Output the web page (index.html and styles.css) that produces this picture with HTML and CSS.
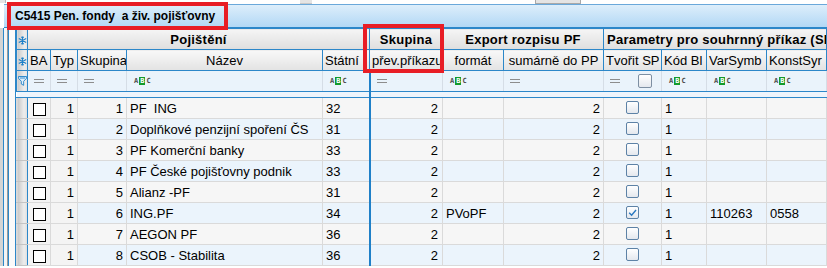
FILE: index.html
```html
<!DOCTYPE html>
<html lang="cs">
<head>
    <meta charset="UTF-8">
    <title>C5415 Pen. fondy a živ. pojišťovny</title>
    <link rel="stylesheet" href="styles.css">
</head>
<body>
    <div class="topStrip">
        <span class="stub stubLeft"></span>
        <span class="stub stubMid"></span>
        <span class="stub stubBox"></span>
    </div>

    <div class="titleBar"><span class="titleText">C5415 Pen. fondy  a živ. pojišťovny</span></div>

    <div class="gridWrap">
        <div class="sideRail"></div>
        <table class="grid">
            <colgroup>
                <col style="width:11px">
                <col style="width:23px">
                <col style="width:27px">
                <col style="width:49px">
                <col style="width:196px">
                <col style="width:47px">
                <col style="width:73px">
                <col style="width:61px">
                <col style="width:100px">
                <col style="width:58px">
                <col style="width:45px">
                <col style="width:60px">
                <col style="width:60px">
            </colgroup>
            <thead>
                <tr class="groupRow">
                    <th class="sel"><svg class="snow" viewBox="0 0 9 9"><path d="M4.5 0.5v8M0.8 2.5l7.4 4M0.8 6.5l7.4-4M3.3 0.8l1.2 1.2 1.2-1.2M3.3 8.2l1.2-1.2 1.2 1.2"/></svg></th>
                    <th colspan="5">Pojištění</th>
                    <th>Skupina</th>
                    <th colspan="2">Export rozpisu PF</th>
                    <th colspan="4" class="left">Parametry pro souhrnný příkaz (SP)</th>
                </tr>
                <tr class="headRow">
                    <th class="sel"><svg class="snow" viewBox="0 0 9 9"><path d="M4.5 0.5v8M0.8 2.5l7.4 4M0.8 6.5l7.4-4M3.3 0.8l1.2 1.2 1.2-1.2M3.3 8.2l1.2-1.2 1.2 1.2"/></svg></th>
                    <th class="left">BA</th>
                    <th class="left">Typ</th>
                    <th class="left">Skupina</th>
                    <th>Název</th>
                    <th class="left">Státní</th>
                    <th class="left">přev.příkazu</th>
                    <th>formát</th>
                    <th>sumárně do PP</th>
                    <th class="left">Tvořit SP</th>
                    <th class="left">Kód Bl</th>
                    <th class="left">VarSymb</th>
                    <th class="left">KonstSyr</th>
                </tr>
                <tr class="filterRow">
                    <td class="sel"><svg class="funnel" viewBox="0 0 10 11"><path d="M0.5 0.5h9v2l-3.2 3.3v4.5l-2.6-1.4v-3.1l-3.2-3.3z"/><path class="funnelIn" d="M2 2.2h6"/></svg></td>
                    <td><span class="eq"></span></td>
                    <td><span class="eq"></span></td>
                    <td><span class="eq"></span></td>
                    <td><span class="abc"><i>A</i><b>B</b><i>C</i></span></td>
                    <td><span class="abc"><i>A</i><b>B</b><i>C</i></span></td>
                    <td class="frozen"><span class="eq"></span></td>
                    <td><span class="abc"><i>A</i><b>B</b><i>C</i></span></td>
                    <td><span class="eq"></span></td>
                    <td><span class="eq"></span><span class="cb cbFilter"></span></td>
                    <td><span class="abc"><i>A</i><b>B</b><i>C</i></span></td>
                    <td><span class="abc"><i>A</i><b>B</b><i>C</i></span></td>
                    <td><span class="abc"><i>A</i><b>B</b><i>C</i></span></td>
                </tr>
                <tr class="gapRow">
                    <td colspan="6"></td>
                    <td colspan="7" class="frozen"></td>
                </tr>
            </thead>
            <tbody>
                <tr>
                    <td class="sel"></td><td class="ba"><span class="box"></span></td><td class="num typ">1</td><td class="num">1</td><td>PF&nbsp; ING</td><td>32</td>
                    <td class="num frozen">2</td><td></td><td class="num">2</td><td class="mid"><span class="cb"></span></td><td>1</td><td></td><td></td>
                </tr>
                <tr>
                    <td class="sel"></td><td class="ba"><span class="box"></span></td><td class="num typ">1</td><td class="num">2</td><td>Doplňkové penzijní spoření ČS</td><td>31</td>
                    <td class="num frozen">2</td><td></td><td class="num">2</td><td class="mid"><span class="cb"></span></td><td>1</td><td></td><td></td>
                </tr>
                <tr>
                    <td class="sel"></td><td class="ba"><span class="box"></span></td><td class="num typ">1</td><td class="num">3</td><td>PF Komerční banky</td><td>33</td>
                    <td class="num frozen">2</td><td></td><td class="num">2</td><td class="mid"><span class="cb"></span></td><td>1</td><td></td><td></td>
                </tr>
                <tr>
                    <td class="sel"></td><td class="ba"><span class="box"></span></td><td class="num typ">1</td><td class="num">4</td><td>PF České pojišťovny podnik</td><td>33</td>
                    <td class="num frozen">2</td><td></td><td class="num">2</td><td class="mid"><span class="cb"></span></td><td>1</td><td></td><td></td>
                </tr>
                <tr>
                    <td class="sel"></td><td class="ba"><span class="box"></span></td><td class="num typ">1</td><td class="num">5</td><td>Alianz -PF</td><td>31</td>
                    <td class="num frozen">2</td><td></td><td class="num">2</td><td class="mid"><span class="cb"></span></td><td>1</td><td></td><td></td>
                </tr>
                <tr>
                    <td class="sel"></td><td class="ba"><span class="box"></span></td><td class="num typ">1</td><td class="num">6</td><td>ING.PF</td><td>34</td>
                    <td class="num frozen">2</td><td>PVoPF</td><td class="num">2</td><td class="mid"><span class="cb checked"><svg viewBox="0 0 10 10"><path d="M2 5.2l2.2 2.2 4-4.6"/></svg></span></td><td>1</td><td>110263</td><td>0558</td>
                </tr>
                <tr>
                    <td class="sel"></td><td class="ba"><span class="box"></span></td><td class="num typ">1</td><td class="num">7</td><td>AEGON PF</td><td>36</td>
                    <td class="num frozen">2</td><td></td><td class="num">2</td><td class="mid"><span class="cb"></span></td><td>1</td><td></td><td></td>
                </tr>
                <tr>
                    <td class="sel"></td><td class="ba"><span class="box"></span></td><td class="num typ">1</td><td class="num">8</td><td>CSOB - Stabilita</td><td>36</td>
                    <td class="num frozen">2</td><td></td><td class="num">2</td><td class="mid"><span class="cb"></span></td><td>1</td><td></td><td></td>
                </tr>
            </tbody>
        </table>
    </div>

    <!-- zvýraznění v náhledu -->
    <div class="mark markTitle"></div>
    <div class="mark markGroup"></div>
</body>
</html>
```

FILE: styles.css
```css
body {
    margin: 0;
    width: 827px;
    height: 268px;
    overflow: hidden;
    position: relative;
    background: #fff;
    font-family: "Liberation Sans", Arial, sans-serif;
    font-size: 13px;
    color: #000;
}

/* horni prouzek s kousky ovladacich prvku */
.topStrip {
    height: 4px;
    display: flex;
}
.stub {
    display: block;
    height: 3px;
    background: #e4e4e4;
}
.stubLeft {
    width: 5px;
    border-right: 1px solid #b8b8b8;
}
.stubMid {
    width: 12px;
    margin-left: 294px;
    border-bottom: 1px solid #c8c8c8;
}
.stubBox {
    width: 44px;
    margin-left: 223px;
    border: 1px solid #a8a8a8;
    border-top: 0;
}

.titleBar {
    height: 22px;
    margin-left: 4px;
    padding-left: 11px;
    display: flex;
    align-items: center;
    border-top: 1px solid #6aa8da;
    border-bottom: 1px solid #2c87c9;
    background: linear-gradient(#ddeefb, #b2d8f5);
}
.titleText {
    font-weight: bold;
    font-size: 12px;
    white-space: pre;
}

.gridWrap {
    display: flex;
}
.sideRail {
    flex: none;
    width: 16px;
    background: linear-gradient(to right, #d4d4d4 0 3px, #2c87c9 3px 4px, #f4f4f4 4px 7px, #9c9c9c 7px 8px, #2c87c9 8px 9px, #fafafa 9px 15px, #2c87c9 15px 16px);
}

.grid {
    flex: none;
    width: 810px;
    border-collapse: collapse;
    table-layout: fixed;
}
.grid th,
.grid td {
    box-sizing: border-box;
    height: 21px;
    padding: 0 3px;
    white-space: nowrap;
    overflow: hidden;
    line-height: 19px;
}

/* hlavicky */
.grid th {
    border: 1px solid #2c87c9;
    background: linear-gradient(#f8f8f8, #e3e3e3);
    font-weight: normal;
    text-align: center;
}
.groupRow th {
    font-weight: bold;
    letter-spacing: 0.25px;
    background: linear-gradient(#f5f5f5, #dedede);
}
.grid th.left {
    text-align: left;
}
.headRow th.left {
    padding-left: 2px;
}
.grid .sel {
    padding: 0;
    background: linear-gradient(to right, #c9c9c9, #eeeeee 70%, #e2e2e2);
    text-align: center;
}
.snow {
    width: 9px;
    height: 9px;
    vertical-align: middle;
    stroke: #1f80c8;
    stroke-width: 1.1;
    fill: none;
}

/* radek filtru */
.filterRow td {
    background: #eaf3fb;
    border-left: 1px solid #d5dde6;
    border-right: 1px solid #d5dde6;
    border-bottom: 1px solid #2c87c9;
    padding-left: 6px;
    font-size: 0;
}
.filterRow td.sel {
    padding: 0;
    border-left: 1px solid #2c87c9;
    border-right: 1px solid #2c87c9;
}
.funnel {
    width: 9px;
    height: 10px;
    vertical-align: middle;
    fill: #dff0fc;
    stroke: #1f80c8;
    stroke-width: 1;
}
.funnelIn {
    stroke: #1f80c8;
}
.eq {
    display: inline-block;
    width: 10px;
    height: 2px;
    border-top: 1px solid #8d8d8d;
    border-bottom: 1px solid #8d8d8d;
    vertical-align: middle;
}
.abc {
    display: inline-block;
    vertical-align: middle;
    font-family: "DejaVu Sans Mono", monospace;
    font-size: 7px;
    line-height: 8px;
    font-weight: bold;
}
.abc i {
    font-style: normal;
    color: #4a4a4a;
    padding: 0 1px;
}
.abc b {
    display: inline-block;
    background: #149a2c;
    color: #fff;
    padding: 0 1px;
}
.cb {
    display: inline-block;
    width: 11px;
    height: 11px;
    border: 1px solid #5d82a6;
    border-radius: 2px;
    background: linear-gradient(#ffffff, #e4e8ee);
    vertical-align: middle;
    box-sizing: content-box;
}
.cbFilter {
    width: 12px;
    height: 12px;
    margin-left: 18px;
    border-color: #7d8fa3;
}
.cb svg {
    display: block;
    width: 11px;
    height: 11px;
    fill: none;
    stroke: #2a78c0;
    stroke-width: 1.3;
}

.grid .gapRow td {
    height: 6px;
    padding: 0;
    line-height: 4px;
    background: #eef5fc;
    border-top: 1px solid #8fb4d4;
    border-bottom: 1px solid #2c87c9;
}

/* data */
.grid tbody td {
    border: 1px solid #dadada;
    background: #f6f6f6;
}
.grid tbody tr:nth-child(even) td {
    background: #ebf4fc;
}
.grid tbody td.sel {
    border-top: 1px solid #c4c4c4;
    border-bottom: 1px solid #c4c4c4;
    border-right: 1px solid #2c87c9;
    background: linear-gradient(to right, #c6c6c6, #ededed 65%, #dedede);
}
.grid tbody tr:nth-child(even) td.sel {
    background: linear-gradient(to right, #c6c6c6, #ededed 65%, #dedede);
}
.grid tbody td.typ {
    padding-right: 4px;
}
.grid tbody td.ba {
    padding: 0;
    text-align: center;
}
.grid tbody tr td.ba,
.grid tbody tr td.typ {
    background: #f4f4f4;
}
.box {
    display: inline-block;
    width: 11px;
    height: 11px;
    border: 1px solid #000;
    background: #fff;
    vertical-align: middle;
}
.num {
    text-align: right;
}
.grid tbody td.num {
    padding-right: 3px;
}
.grid tbody td.frozen.num {
    padding-right: 4px;
}
.mid {
    text-align: center;
}
.grid tbody td.mid {
    font-size: 0;
}
.grid td.frozen {
    border-left: 2px solid #1f80c8;
}

/* cervene oramovani */
.mark {
    position: absolute;
    border: 4px solid #e81d25;
    box-sizing: border-box;
}
.markTitle {
    left: 7px;
    top: 2px;
    width: 221px;
    height: 28px;
}
.markGroup {
    left: 363px;
    top: 24px;
    width: 81px;
    height: 49px;
}
```
